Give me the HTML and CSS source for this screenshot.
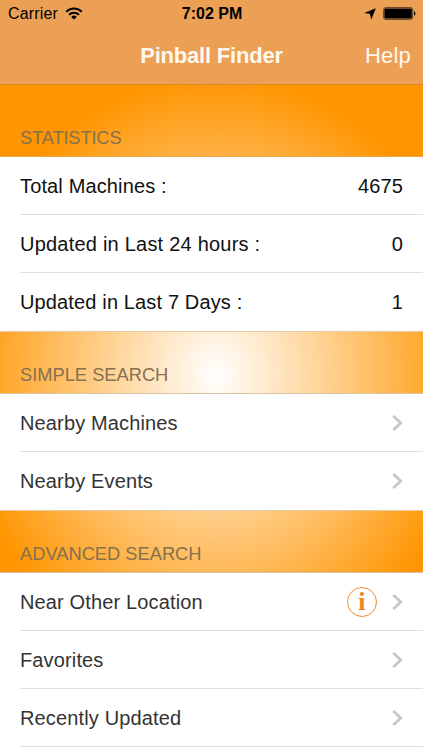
FILE: index.html
```html
<!DOCTYPE html>
<html lang="en">
<head>
  <meta charset="UTF-8">
  <title>Pinball Finder</title>
  <meta name="viewport" content="width=device-width, initial-scale=1.0">
  <link rel="stylesheet" href="styles.css">
</head>
<body>

  <header class="header">
    <div class="status-bar">
      <div class="carrier">
        <span>Carrier</span>
        <svg class="wifi" width="18" height="13" viewBox="0 0 18 13" fill="none" stroke="#000" stroke-width="2">
          <path d="M1.2 4.7a11 11 0 0 1 15.6 0M4 7.8a7 7 0 0 1 10 0" />
          <path d="M9 12.6L6.2 9.9a4 4 0 0 1 5.6 0z" fill="#000" stroke="none" />
        </svg>
      </div>
      <span class="time">7:02 PM</span>
      <div class="indicators">
        <svg width="12" height="12" viewBox="0 0 12 12">
          <path d="M11.8.2L7.2 11.8 6 6 .2 5z" fill="#000" />
        </svg>
        <svg width="33" height="13" viewBox="0 0 33 13">
          <rect x=".6" y=".6" width="29" height="11.8" rx="2" fill="none" stroke="#0009" />
          <rect x="1.4" y="1.4" width="27.4" height="10.2" rx="1" fill="#000" />
          <path d="M31 4.3a2.4 2.4 0 0 1 0 4.4z" fill="#000" />
        </svg>
      </div>
    </div>
    <nav class="nav-bar">
      <h1>Pinball Finder</h1>
      <a class="help">Help</a>
    </nav>
  </header>

  <main>
    <h2 class="first">Statistics</h2>
    <ul class="stats">
      <li><span>Total Machines :</span><span class="value">4675</span></li>
      <li><span class="hours">Updated in Last 24 hours :</span><span class="value">0</span></li>
      <li><span>Updated in Last 7 Days :</span><span class="value">1</span></li>
    </ul>

    <h2>Simple Search</h2>
    <ul>
      <li><span>Nearby Machines</span><svg class="chevron" viewBox="0 0 12 18"><path d="M2.3 2l7.5 7-7.5 7" /></svg></li>
      <li><span>Nearby Events</span><svg class="chevron" viewBox="0 0 12 18"><path d="M2.3 2l7.5 7-7.5 7" /></svg></li>
    </ul>

    <h2>Advanced Search</h2>
    <ul class="advanced">
      <li><span>Near Other Location</span><span class="info">i</span><svg class="chevron" viewBox="0 0 12 18"><path d="M2.3 2l7.5 7-7.5 7" /></svg></li>
      <li><span>Favorites</span><svg class="chevron" viewBox="0 0 12 18"><path d="M2.3 2l7.5 7-7.5 7" /></svg></li>
      <li><span>Recently Updated</span><svg class="chevron" viewBox="0 0 12 18"><path d="M2.3 2l7.5 7-7.5 7" /></svg></li>
    </ul>
  </main>

</body>
</html>
```
FILE: styles.css
```css
* {
  margin: 0;
  padding: 0;
  box-sizing: border-box;
}

body {
  height: 750px;
  overflow: hidden;
  font-family: "Liberation Sans", Arial, sans-serif;
  background: radial-gradient(257px 300px at 216px 375px, #fff, #ff9500);
}

.header {
  height: 85px;
  background: #eba056;
  border-bottom: 1px solid #dc862a;
}

.status-bar {
  display: grid;
  grid-template-columns: 1fr auto 1fr;
  align-items: center;
  height: 28px;
  padding: 0 7px 0 8px;
  font-size: 16px;
}

.carrier,
.indicators {
  display: flex;
  align-items: center;
  gap: 7px;
}

.carrier {
  letter-spacing: 0.15px;
}

.wifi {
  margin-bottom: 1px;
}

.time {
  font-weight: bold;
}

.indicators {
  justify-content: flex-end;
}

.indicators svg {
  margin-bottom: 1px;
}

.nav-bar {
  display: grid;
  grid-template-columns: 1fr auto 1fr;
  align-items: center;
  height: 56px;
  padding: 0 12px;
  color: #fff8ee;
}

h1 {
  grid-column: 2;
  font-size: 22px;
  line-height: 26px;
  letter-spacing: -0.2px;
}

.help {
  justify-self: end;
  font-size: 22px;
  line-height: 26px;
  letter-spacing: 0.2px;
}

main {
  display: flex;
  flex-direction: column;
  height: 665px;
}

h2 {
  display: flex;
  align-items: flex-end;
  height: 63px;
  padding: 0 20px 7px;
  border-top: 1px solid #e2c9a2;
  border-bottom: 1px solid #d8c4a4;
  color: #857050;
  font-size: 18.3px;
  font-weight: normal;
  line-height: 23px;
  text-transform: uppercase;
}

.first {
  height: 72px;
  border-top: none;
  border-bottom-color: #eba84e;
  letter-spacing: -0.15px;
}

ul {
  list-style: none;
  background: #fff;
}

li {
  display: flex;
  align-items: center;
  height: 58px;
  margin-left: 20px;
  padding: 2px 20px 0 0;
  border-bottom: 1px solid #dedede;
  color: #333;
  font-size: 20px;
  letter-spacing: 0.14px;
}

li:last-child {
  border-bottom-color: #fff;
}

.advanced {
  flex: 1;
}

.advanced li:last-child {
  border-bottom-color: #dedede;
}

.stats li {
  color: #111;
}

.hours {
  letter-spacing: 0.22px;
}

.value,
.chevron {
  margin-left: auto;
}

.chevron {
  width: 12px;
  height: 18px;
  margin-bottom: 1px;
  fill: none;
  stroke: #c7c7cc;
  stroke-width: 2.8;
}

.info {
  display: flex;
  justify-content: center;
  align-items: center;
  width: 30px;
  height: 30px;
  margin-bottom: 2px;
  margin-left: auto;
  border: 1.5px solid #ee8a2c;
  border-radius: 50%;
  color: #ee8420;
  font: bold 26px/28px "Liberation Serif", serif;
}

.info + .chevron {
  margin-left: 14px;
}
```
